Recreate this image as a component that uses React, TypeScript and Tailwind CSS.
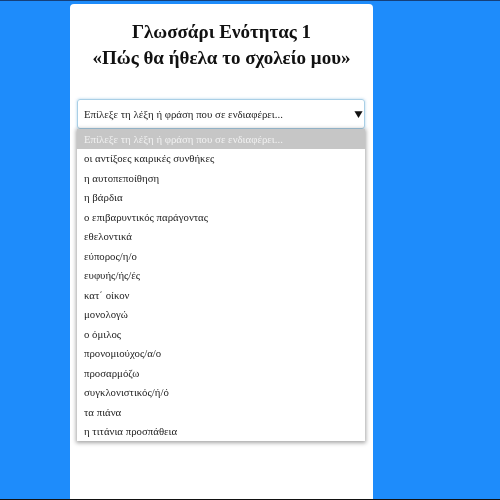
const options = [
  "οι αντίξοες καιρικές συνθήκες",
  "η αυτοπεποίθηση",
  "η βάρδια",
  "ο επιβαρυντικός παράγοντας",
  "εθελοντικά",
  "εύπορος/η/ο",
  "ευφυής/ής/ές",
  "κατ΄ οίκον",
  "μονολογώ",
  "ο όμιλος",
  "προνομιούχος/α/ο",
  "προσαρμόζω",
  "συγκλονιστικός/ή/ό",
  "τα πιάνα",
  "η τιτάνια προσπάθεια",
];
const placeholder = "Επίλεξε τη λέξη ή φράση που σε ενδιαφέρει...";

export default function App() {
  return (
    <div className="h-[500px] w-[500px] overflow-hidden bg-[#1e8cfb] border-t border-b border-t-[#15407a] border-b-[#111111] font-['Liberation_Serif',serif] text-[#222]">
      <div className="ml-[70px] mt-[3px] h-[495px] w-[303px] rounded-t-[4px] bg-white px-[7px] pt-[15px]">
        <h1 className="text-center text-[19px] leading-[26px] font-bold text-[#111] blur-[0.5px]">
          Γλωσσάρι Ενότητας 1
          <br />
          «Πώς θα ήθελα το σχολείο μου»
        </h1>
        <div className="mt-[28px] flex h-[30px] w-[288px] items-center justify-between rounded-[3px] border border-[#a9cfe6] pl-[6px] pr-[1px] text-[10.8px] shadow-[0_0_3px_rgba(120,180,220,0.6)]">
          <span className="text-[#222] blur-[0.6px]">{placeholder}</span>
          <svg width="9" height="9" viewBox="0 0 10 9" className="mt-[1px] blur-[0.3px]">
            <path d="M0.5 1h9L5 8.5z" fill="#111" />
          </svg>
        </div>
        <div className="w-[288px] bg-white text-[10.8px] shadow-[0_1px_4px_1px_rgba(0,0,0,0.35)]">
          <div className="flex h-[19.5px] items-center bg-[#c6c6c6] pl-[7px] text-[#f1f1f1]">
            <span className="blur-[0.6px]">{placeholder}</span>
          </div>
          {options.map((o) => (
            <div key={o} className="flex h-[19.53px] items-center pl-[7px] text-[#222]">
              <span className="blur-[0.6px]">{o}</span>
            </div>
          ))}
        </div>
      </div>
    </div>
  );
}
